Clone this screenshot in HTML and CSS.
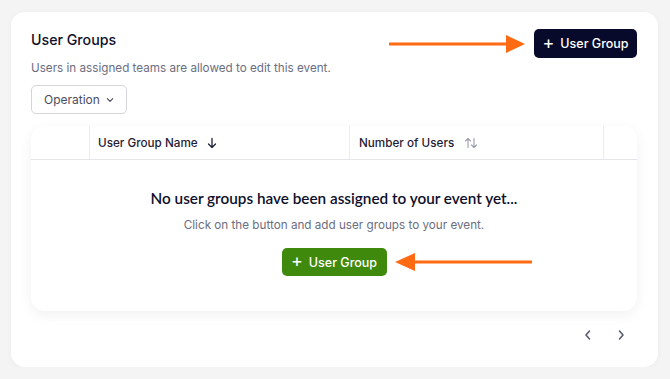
FILE: index.html
```html
<!DOCTYPE html>
<html lang="en">
<head>
  <meta charset="UTF-8" />
  <title>User Groups</title>
  <link rel="stylesheet" href="styles.css">
</head>
<body>
  <section class="card">
    <div class="card-head">
      <h2>User Groups</h2>
      <button class="btn btn-dark"><span class="plus">+</span>User Group</button>
    </div>
    <p class="hint">Users in assigned teams are allowed to edit this event.</p>
    <button class="select">Operation
      <svg width="12" height="12" viewBox="0 0 12 12"><path d="M2 4l4 4 4-4" fill="none" stroke="#3c3e50" stroke-width="1.5" stroke-linecap="round" stroke-linejoin="round"/></svg>
    </button>

    <div class="table">
      <div class="thead">
        <div class="th th-check"></div>
        <div class="th th-name">User Group Name
          <svg width="12" height="12" viewBox="0 0 12 12"><path d="M6 1.5v9M2.5 7 6 10.5 9.5 7" fill="none" stroke="#1f2133" stroke-width="1.3" stroke-linecap="round" stroke-linejoin="round"/></svg>
        </div>
        <div class="th th-count">Number of Users
          <svg width="14" height="12" viewBox="0 0 14 12"><path d="M4 10.5v-9M1.5 4 4 1.5 6.5 4M10 1.5v9M7.5 8 10 10.5 12.5 8" fill="none" stroke="#9a9cab" stroke-width="1.1" stroke-linecap="round" stroke-linejoin="round"/></svg>
        </div>
        <div class="th th-end"></div>
      </div>
      <div class="empty">
        <h3>No user groups have been assigned to your event yet...</h3>
        <p>Click on the button and add user groups to your event.</p>
        <button class="btn btn-green"><span class="plus">+</span>User Group</button>
      </div>
    </div>

    <div class="pager">
      <button class="page-btn"><svg width="10" height="12" viewBox="0 0 10 12"><path d="M6.5 2 3 6l3.5 4" fill="none" stroke="#55576a" stroke-width="1.5" stroke-linecap="round" stroke-linejoin="round"/></svg></button>
      <button class="page-btn"><svg width="10" height="12" viewBox="0 0 10 12"><path d="M3.5 2 7 6l-3.5 4" fill="none" stroke="#55576a" stroke-width="1.5" stroke-linecap="round" stroke-linejoin="round"/></svg></button>
    </div>

    <!-- annotation arrows -->
    <svg class="arrow arrow-top" width="137" height="20" viewBox="0 0 137 20"><path d="M0 10h120" stroke="#ff6a13" stroke-width="3"/><path d="M117 1l19 9-19 9z" fill="#ff6a13"/></svg>
    <svg class="arrow arrow-bottom" width="139" height="20" viewBox="0 0 139 20"><path d="M18 10h120" stroke="#ff6a13" stroke-width="3"/><path d="M1 10l20-9v18z" fill="#ff6a13"/></svg>
  </section>
</body>
</html>
```

FILE: styles.css
```css
* {
  margin: 0;
  padding: 0;
  box-sizing: border-box;
}

body {
  font-family: 'Inter', 'Liberation Sans', sans-serif;
  background-color: #f4f4f5;
  color: #0d0f2b;
  padding: 12px 12px 0 11px;
}

.card {
  position: relative;
  width: 647px;
  height: 355px;
  background: #fff;
  border-radius: 14px;
  box-shadow: 0 1px 6px rgba(0,0,0,0.04);
  padding: 17px 21px 0 20px;
}

.card-head {
  display: flex;
  justify-content: space-between;
  align-items: flex-start;
  height: 29px;
}

.card-head h2 {
  font-size: 14.2px;
  font-weight: 500;
  line-height: 22px;
  color: #0d0f2b;
}

.btn {
  display: inline-flex;
  align-items: center;
  justify-content: center;
  gap: 6px;
  height: 29px;
  padding: 0;
  border: none;
  border-radius: 5px;
  color: #fff;
  font-family: inherit;
  font-size: 12.5px;
  font-weight: 500;
  white-space: nowrap;
}

.btn .plus {
  font-size: 18px;
  font-weight: 400;
  line-height: 1;
  margin-top: -2px;
}

.btn-dark {
  background-color: #070a2a;
  width: 103px;
}

.btn-green {
  background-color: #3f8a0c;
  width: 105px;
  height: 28px;
}

.hint {
  margin-top: 1px;
  font-size: 11.7px;
  line-height: 18px;
  color: #6b6e80;
}

.select {
  margin-top: 8px;
  display: inline-flex;
  align-items: center;
  gap: 6px;
  width: 96px;
  height: 29px;
  padding: 0 12px;
  background: #fff;
  border: 1px solid #d4d5db;
  border-radius: 5px;
  font-family: inherit;
  font-size: 12px;
  color: #4b4d5e;
}

.table {
  margin-top: 12px;
  height: 185px;
  border-radius: 14px;
  background: #fff;
  box-shadow: 0 4px 14px rgba(0,0,0,0.06);
}

.thead {
  display: flex;
  height: 34px;
  border-bottom: 1px solid #e4e5ea;
}

.th {
  display: flex;
  align-items: center;
  gap: 8px;
  font-size: 11.7px;
  font-weight: 500;
  color: #1f2133;
  padding-left: 8px;
}

.th-check { width: 59px; border-right: 1px solid #ececf0; }
.th-name { width: 260px; border-right: 1px solid #ececf0; }
.th-count { width: 254px; border-right: 1px solid #ececf0; padding-left: 9px; gap: 10px; }
.th-end { flex: 1; }

.empty {
  display: flex;
  flex-direction: column;
  align-items: center;
  padding-top: 28px;
}

.empty h3 {
  font-family: 'Lato', 'Inter', sans-serif;
  font-size: 15.3px;
  font-weight: 600;
  line-height: 20px;
  color: #0d0f2b;
}

.empty p {
  margin-top: 8px;
  font-size: 11.7px;
  line-height: 18px;
  color: #6b6e80;
}

.empty .btn {
  margin-top: 14px;
}

.pager {
  display: flex;
  justify-content: flex-end;
  gap: 9px;
  margin-top: 12px;
  padding-right: 4px;
}

.page-btn {
  width: 24px;
  height: 24px;
  display: flex;
  align-items: center;
  justify-content: center;
  background: none;
  border: none;
}

.arrow {
  position: absolute;
}

.arrow-top {
  left: 378px;
  top: 22px;
}

.arrow-bottom {
  left: 383px;
  top: 240px;
}
```
